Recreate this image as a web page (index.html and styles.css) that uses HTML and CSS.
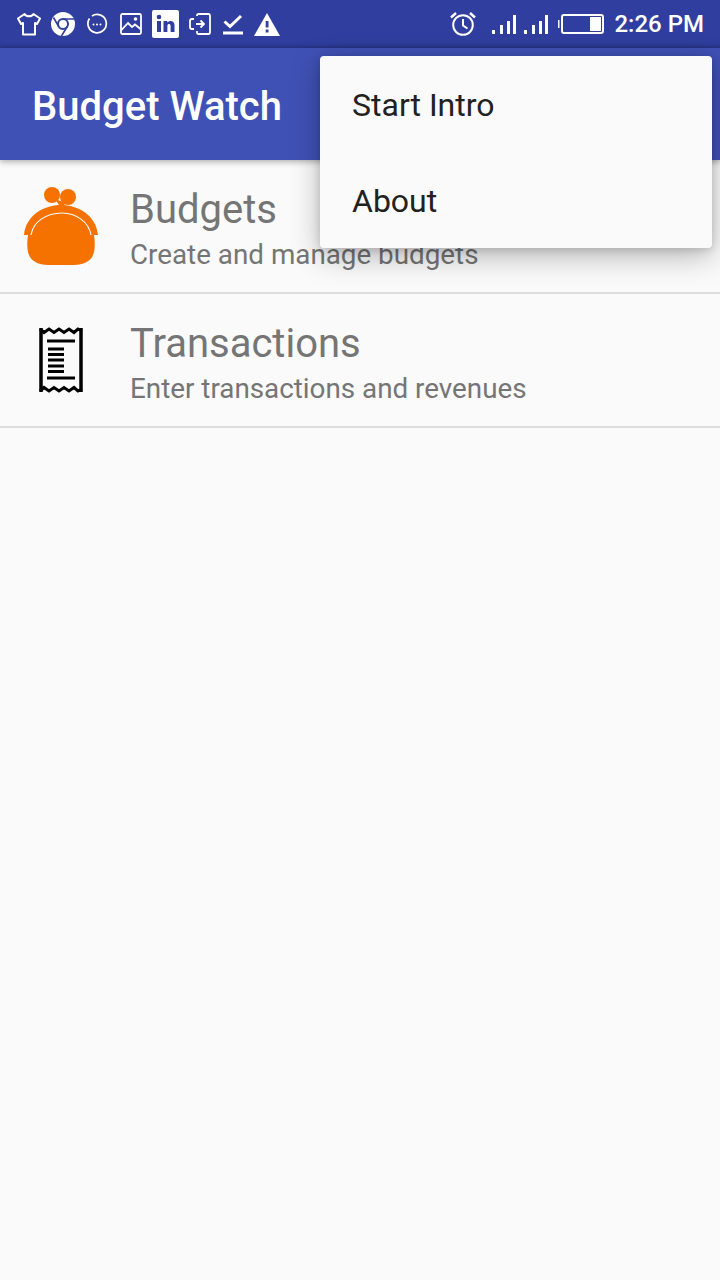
FILE: index.html
```html
<!DOCTYPE html>
<html lang="en">
<head>
  <meta charset="UTF-8" />
  <title>Budget Watch</title>
  <meta name="viewport" content="width=device-width, initial-scale=1" />
  <link rel="stylesheet" href="styles.css">
</head>
<body>
  <div class="status-bar">
    <div class="status-icons">
      <!-- shirt -->
      <svg class="si" width="34" height="24" viewBox="0 0 34 24"><path d="M7.500 2 L1 6.500 L4 12 L6 11 V22.500 H18 V11 L20 12 L23 6.500 L16.500 2 C15 5 9 5 7.500 2 Z" fill="none" stroke="#fff" stroke-width="2" stroke-linejoin="round"/></svg>
      <!-- chrome -->
      <svg class="si" width="36" height="24" viewBox="0 0 36 24"><circle cx="12" cy="12" r="12" fill="#fff"/><circle cx="12" cy="12" r="5" fill="#fff" stroke="#303f9f" stroke-width="2"/><path d="M12 7 H23 M7.700 14.500 L2.500 5.500 M16.300 14.500 L10.500 24" stroke="#303f9f" stroke-width="1.600" fill="none"/></svg>
      <!-- chat bubble -->
      <svg class="si" width="33" height="22" viewBox="0 0 33 22"><path d="M5 3 A9.200 9.200 0 1 1 2.500 5.500" fill="none" stroke="#fff" stroke-width="1.700"/><circle cx="6.500" cy="11.500" r="1" fill="#fff"/><circle cx="10" cy="11.500" r="1" fill="#fff"/><circle cx="13.500" cy="11.500" r="1" fill="#fff"/></svg>
      <!-- picture -->
      <svg class="si" width="32" height="22" viewBox="0 0 32 22"><rect x="1" y="1" width="20" height="20" rx="1.500" fill="none" stroke="#fff" stroke-width="1.800"/><path d="M1.500 17 L8 10 L12 14 L15 11.500 L20.500 16" fill="none" stroke="#fff" stroke-width="1.800"/><circle cx="15.500" cy="6" r="1.800" fill="#fff"/></svg>
      <!-- linkedin -->
      <svg class="si" width="37" height="28" viewBox="0 0 37 28"><rect width="27" height="28" rx="2" fill="#fff"/><rect x="5" y="11" width="4" height="11" fill="#303f9f"/><circle cx="7" cy="7" r="2.300" fill="#303f9f"/><path d="M11.500 11 H15.300 V12.600 C17 10 22.500 10.200 22.500 15 V22 H18.600 V16 C18.600 13.400 15.400 13.400 15.400 16 V22 H11.500 Z" fill="#303f9f"/></svg>
      <!-- transfer -->
      <svg class="si" width="34" height="22" viewBox="0 0 34 22"><path d="M8 3 V2.500 Q8 1 9.500 1 H19.500 Q21 1 21 3 V19 Q21 21 19.500 21 H9.500 Q8 21 8 19.500 V18" fill="none" stroke="#fff" stroke-width="1.800"/><path d="M5 6 H3 Q1 6 1 8 V14 Q1 16 3 16 H5" fill="none" stroke="#fff" stroke-width="1.800"/><path d="M7 11 H15 M11.500 7.500 L15 11 L11.500 14.500" fill="none" stroke="#fff" stroke-width="1.800"/></svg>
      <!-- check with bar -->
      <svg class="si" width="31" height="22" viewBox="0 0 31 22"><path d="M1.500 8.500 L7 13.500 L18 3" fill="none" stroke="#fff" stroke-width="3"/><rect y="18.500" width="20" height="3" fill="#fff"/></svg>
      <!-- warning -->
      <svg class="si" width="26" height="23" viewBox="0 0 26 23"><path d="M13 0 L26 23 H0 Z" fill="#fff"/><rect x="11.700" y="8" width="2.800" height="6.500" fill="#303f9f"/><rect x="11.700" y="16.500" width="2.800" height="3" fill="#303f9f"/></svg>
    </div>
    <div class="status-right">
      <!-- alarm -->
      <svg class="alarm" width="26" height="24" viewBox="0 0 26 24"><circle cx="13" cy="13" r="9.800" fill="none" stroke="#fff" stroke-width="2"/><path d="M13 7 V13.500 L17.500 16.500" fill="none" stroke="#fff" stroke-width="2"/><path d="M1 5.500 L6 1 M25 5.500 L20 1" stroke="#fff" stroke-width="2.400"/></svg>
      <!-- signal, two sims -->
      <svg class="signal" width="56" height="19" viewBox="0 0 56 19"><path d="M0 15h3v4H0zM8 10h3v9H8zM15 6h3v13h-3zM21 0h3v19h-3zM32 15h3v4h-3zM40 10h3v9h-3zM47 6h3v13h-3zM53 0h3v19h-3z" fill="#fff"/></svg>
      <!-- battery -->
      <svg class="battery" width="46" height="20" viewBox="0 0 46 20"><rect y="6" width="1.500" height="8" fill="#fff"/><rect x="4" y="1" width="41" height="18" rx="2" fill="none" stroke="#fff" stroke-width="2"/><rect x="32" y="3" width="11" height="14" fill="#fff"/></svg>
      <span class="clock">2:26 PM</span>
    </div>
  </div>

  <header class="app-bar">
    <h1>Budget Watch</h1>
  </header>

  <div class="row">
    <div class="row-icon">
      <svg width="74" height="78" viewBox="0 0 74 78">
        <circle cx="28" cy="8" r="8" fill="#f57200"/>
        <circle cx="44" cy="10" r="8" fill="#f57200"/>
        <path d="M31 12 L37 21 L42 16 Z" fill="#f57200"/>
        <path d="M0 48 C2 28 20 18 37 18 C54 18 72 28 74 48 H70 C71 55 71 60 70 65 C68 74 60 78 50 78 H24 C14 78 6 74 4 65 C3 60 3 55 4 48 Z" fill="#f57200"/>
        <path d="M7 48 C9 35 22 26 38 26 C52 26 65 35 67 48" fill="none" stroke="#fafafa" stroke-width="1.200"/>
      </svg>
    </div>
    <div class="row-text">
      <div class="row-title">Budgets</div>
      <div class="row-sub">Create and manage budgets</div>
    </div>
  </div>

  <div class="row">
    <div class="row-icon">
      <svg width="44" height="66" viewBox="0 0 44 66">
        <path d="M2 1 V65 M42 1 V65" stroke="#000" stroke-width="3.500"/>
        <path d="M1 2 L5 5.500 L10 2 L15 5.500 L20 2 L25 5.500 L30 2 L35 5.500 L39 2 L43 4" fill="none" stroke="#000" stroke-width="3"/>
        <path d="M1 64 L5 60.500 L10 64 L15 60.500 L20 64 L25 60.500 L30 64 L35 60.500 L39 64 L43 62" fill="none" stroke="#000" stroke-width="3"/>
        <path d="M8 14 H36 M8 51 H36" stroke="#000" stroke-width="3"/>
        <path d="M9 22 H25 M9 27.500 H25 M9 33 H25 M9 39 H25 M9 44.500 H25" stroke="#000" stroke-width="3"/>
      </svg>
    </div>
    <div class="row-text">
      <div class="row-title">Transactions</div>
      <div class="row-sub">Enter transactions and revenues</div>
    </div>
  </div>

  <div class="menu">
    <div class="menu-item">Start Intro</div>
    <div class="menu-item">About</div>
  </div>
</body>
</html>
```

FILE: styles.css
```css
html, body {
  height: 100%;
}
body {
  margin: 0;
  background: #fafafa;
  font-family: Roboto, "Noto Sans", sans-serif;
  overflow: hidden;
  position: relative;
}

.status-bar {
  height: 48px;
  background: #303f9f;
  display: flex;
  justify-content: space-between;
  align-items: center;
  padding: 0 16px 0 17px;
  box-sizing: border-box;
  box-shadow: inset 0 -6px 6px -6px rgba(0, 0, 0, 0.3);
}
.status-icons {
  display: flex;
  align-items: center;
}
.si {
  display: block;
}
.status-right {
  display: flex;
  align-items: center;
}
.alarm {
  margin-right: 16px;
}
.signal {
  margin-right: 10px;
}
.battery {
  margin-right: 10px;
}
.clock {
  color: #fff;
  font-size: 24px;
  font-weight: 500;
}

.app-bar {
  height: 112px;
  background: #3f51b5;
  display: flex;
  align-items: center;
  padding-left: 32px;
  box-shadow: 0 2px 6px rgba(0, 0, 0, 0.3);
  position: relative;
}
.app-bar h1 {
  margin: 4px 0 0;
  color: #fff;
  font-size: 40px;
  font-weight: 500;
}

.row {
  height: 134px;
  box-sizing: border-box;
  border-bottom: 2px solid #dcdcdc;
  display: flex;
  align-items: center;
}
.row-icon {
  width: 122px;
  margin-right: 8px;
  display: flex;
  justify-content: center;
}
.row-icon svg {
  display: block;
}
.row-text {
  padding-top: 8px;
}
.row-title {
  font-size: 40px;
  line-height: 46px;
  color: #757575;
  margin-bottom: 4px;
}
.row-sub {
  font-size: 27.8px;
  line-height: 36px;
  color: #757575;
}

.menu {
  position: absolute;
  left: 320px;
  top: 56px;
  width: 392px;
  height: 192px;
  background: #fafafa;
  border-radius: 4px;
  box-shadow: 0 8px 30px rgba(0, 0, 0, 0.28), 0 2px 8px rgba(0, 0, 0, 0.14);
}
.menu-item {
  height: 96px;
  display: flex;
  align-items: center;
  padding: 2px 0 0 32px;
  box-sizing: border-box;
  font-size: 32px;
  color: #212121;
}
```
